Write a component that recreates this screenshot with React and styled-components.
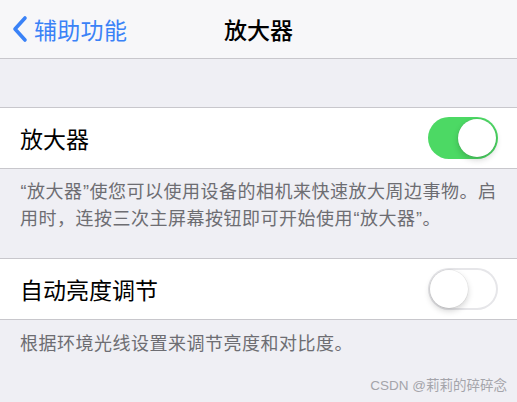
import React, { useState } from "react";
import styled, { createGlobalStyle } from "styled-components";

const GlobalStyle = createGlobalStyle`
  html, body {
    margin: 0;
    padding: 0;
    background: #efeff4;
  }
  body {
    font-family: "Noto Sans CJK SC", "Noto Sans", sans-serif;
    -webkit-font-smoothing: antialiased;
  }
`;

const Page = styled.div`
  width: 517px;
  height: 402px;
  overflow: hidden;
  display: flex;
  flex-direction: column;
  background: #efeff4;
`;

const NavBar = styled.div`
  height: 58px;
  flex-shrink: 0;
  background: #f7f7f9;
  border-bottom: 1px solid #c8c7cc;
  display: grid;
  grid-template-columns: 1fr auto 1fr;
  align-items: center;
`;

const BackButton = styled.div`
  display: flex;
  align-items: center;
  gap: 5px;
  padding-left: 11px;
  color: #3a82f7;
  font-size: 23px;
  letter-spacing: 0.3px;
`;

const Title = styled.div`
  font-size: 23px;
  font-weight: 500;
  color: #000;
`;

const Spacer = styled.div`
  height: ${(p) => p.h}px;
  flex-shrink: 0;
`;

const Row = styled.div`
  height: 60px;
  flex-shrink: 0;
  background: #fff;
  border-top: 1px solid #c8c7cc;
  border-bottom: 1px solid #c8c7cc;
  display: flex;
  align-items: center;
  justify-content: space-between;
  padding: 0 19px 0 20px;
`;

const RowLabel = styled.div`
  font-size: 23px;
  color: #000;
`;

const Track = styled.button`
  width: 70px;
  height: 42px;
  border-radius: 21px;
  border: none;
  padding: 0;
  position: relative;
  cursor: pointer;
  background: ${(p) => (p.on ? "#4cd964" : "#fff")};
  box-shadow: ${(p) => (p.on ? "none" : "inset 0 0 0 2px #e6e6e9")};
`;

const Knob = styled.span`
  position: absolute;
  top: 2px;
  left: ${(p) => (p.on ? "30px" : "2px")};
  width: 38px;
  height: 38px;
  border-radius: 50%;
  background: #fff;
  box-shadow: 0 3px 6px rgba(0, 0, 0, 0.18), 0 0 0 0.5px rgba(0, 0, 0, 0.08);
`;

const Note = styled.div`
  padding: ${(p) => p.top}px 0 0 20px;
  height: ${(p) => p.h}px;
  flex-shrink: 0;
  box-sizing: border-box;
  font-size: 18px;
  line-height: 25px;
  color: #6d6d72;
  letter-spacing: 0.5px;
  white-space: nowrap;
`;

const Quote = styled.span`
  font-family: "Liberation Sans", sans-serif;
  letter-spacing: 0;
  padding: 0 0.5px;
`;

const Watermark = styled.div`
  text-align: right;
  padding-right: 10px;
  font-family: "Liberation Sans", "Noto Sans CJK SC", sans-serif;
  font-size: 13.5px;
  color: #a4a4aa;
  margin-top: 19px;
`;

const Toggle = ({ initial }) => {
  const [on, setOn] = useState(initial);
  return (
    <Track on={on ? 1 : 0} onClick={() => setOn(!on)}>
      <Knob on={on ? 1 : 0} />
    </Track>
  );
};

const App = () => (
  <Page>
    <GlobalStyle />
    <NavBar>
      <BackButton>
        <svg width="18" height="28" viewBox="0 0 18 28">
          <path
            d="M14 3 L4 14 L14 25"
            fill="none"
            stroke="#3a82f7"
            strokeWidth="3.6"
            strokeLinecap="round"
            strokeLinejoin="round"
          />
        </svg>
        辅助功能
      </BackButton>
      <Title>放大器</Title>
      <div />
    </NavBar>
    <Spacer h={48} />
    <Row>
      <RowLabel>放大器</RowLabel>
      <Toggle initial={true} />
    </Row>
    <Note top={9} h={89}>
      <Quote>“</Quote>放大器<Quote>”</Quote>使您可以使用设备的相机来快速放大周边事物。启
      <br />
      用时，连按三次主屏幕按钮即可开始使用<Quote>“</Quote>放大器<Quote>”</Quote>。
    </Note>
    <Row>
      <RowLabel>自动亮度调节</RowLabel>
      <Toggle initial={false} />
    </Row>
    <Note top={10} h={35}>
      根据环境光线设置来调节亮度和对比度。
    </Note>
    <Watermark>CSDN @莉莉的碎碎念</Watermark>
  </Page>
);

export default App;
